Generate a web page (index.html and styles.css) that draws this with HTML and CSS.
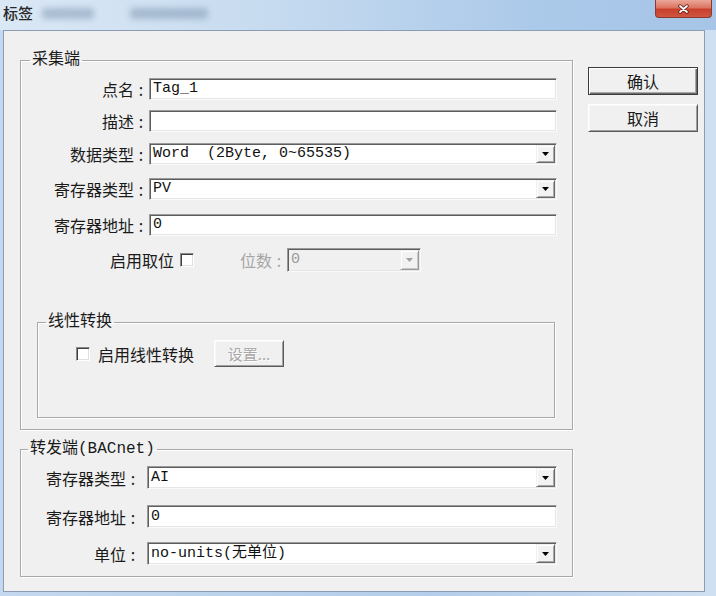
FILE: index.html
```html
<!DOCTYPE html>
<html lang="zh-CN">
<head>
<meta charset="utf-8">
<title>标签</title>
<link rel="stylesheet" href="styles.css">
</head>
<body>
<div class="window">
  <div class="titlebar">
    <span class="title">标签</span>
    <span class="blur b1"></span>
    <span class="blur b2"></span>
    <button class="close" type="button" aria-label="关闭">
      <svg width="11" height="10" viewBox="0 0 11 10"><path d="M2 2 L9 8 M9 2 L2 8" stroke="#5a1a12" stroke-width="3.4" stroke-linecap="round" fill="none"/><path d="M2 2 L9 8 M9 2 L2 8" stroke="#fff" stroke-width="1.8" stroke-linecap="round" fill="none"/></svg>
    </button>
  </div>
  <div class="client">
    <div class="main">
      <fieldset class="group g1">
        <legend>采集端</legend>
        <div class="row r1"><label class="lbl">点名<span class="colon">:</span></label><div class="field"><span class="val">Tag_1</span></div></div>
        <div class="row r2"><label class="lbl">描述<span class="colon">:</span></label><div class="field"><span class="val"></span></div></div>
        <div class="row r3"><label class="lbl">数据类型<span class="colon">:</span></label><div class="field combo"><span class="val">Word  (2Byte, 0~65535)</span><span class="drop"><svg width="7" height="4" viewBox="0 0 7 4"><path d="M0 0 H7 L3.5 4 Z" fill="#000"/></svg></span></div></div>
        <div class="row r4"><label class="lbl">寄存器类型<span class="colon">:</span></label><div class="field combo"><span class="val">PV</span><span class="drop"><svg width="7" height="4" viewBox="0 0 7 4"><path d="M0 0 H7 L3.5 4 Z" fill="#000"/></svg></span></div></div>
        <div class="row r5"><label class="lbl">寄存器地址<span class="colon">:</span></label><div class="field"><span class="val">0</span></div></div>
        <div class="row r6">
          <span class="txt">启用取位</span><span class="check"></span>
          <span class="txt dim bits">位数<span class="colon">:</span></span>
          <div class="field combo disabled"><span class="val">0</span><span class="drop"><svg width="7" height="4" viewBox="0 0 7 4"><path d="M0 0 H7 L3.5 4 Z" fill="#a0a0a0"/></svg></span></div>
        </div>
        <fieldset class="group g-inner">
          <legend>线性转换</legend>
          <div class="row lin">
            <span class="check"></span><span class="txt">启用线性转换</span>
            <button class="btn set" type="button" disabled>设置...</button>
          </div>
        </fieldset>
      </fieldset>
      <fieldset class="group g2">
        <legend>转发端(BACnet)</legend>
        <div class="row s1"><label class="lbl">寄存器类型<span class="colon">:</span></label><div class="field combo tall"><span class="val">AI</span><span class="drop"><svg width="7" height="4" viewBox="0 0 7 4"><path d="M0 0 H7 L3.5 4 Z" fill="#000"/></svg></span></div></div>
        <div class="row s2"><label class="lbl">寄存器地址<span class="colon">:</span></label><div class="field tall"><span class="val">0</span></div></div>
        <div class="row s3"><label class="lbl">单位<span class="colon">:</span></label><div class="field combo tall"><span class="val">no-units(无单位)</span><span class="drop"><svg width="7" height="4" viewBox="0 0 7 4"><path d="M0 0 H7 L3.5 4 Z" fill="#000"/></svg></span></div></div>
      </fieldset>
    </div>
    <div class="side">
      <button class="btn default" type="button">确认</button>
      <button class="btn" type="button">取消</button>
    </div>
  </div>
</div>
</body>
</html>
```
FILE: styles.css
```css
* { box-sizing: border-box; }
html, body { margin: 0; padding: 0; }
body {
  width: 716px;
  height: 596px;
  overflow: hidden;
  background: linear-gradient(to right, #c4d9ef, #b4cdea 60%, #cfe0f2);
  font-family: "Noto Sans CJK SC", sans-serif;
  font-size: 16px;
  line-height: 20px;
  color: #1a1a1a;
}
.window { display: flex; flex-direction: column; height: 596px; }

.titlebar {
  height: 30px;
  flex: none;
  display: flex;
  align-items: flex-start;
  background: linear-gradient(to right, #dbe8f5 0%, #c8dcf0 35%, #abc9e9 75%, #a6c5e7 100%);
}
.title { margin: 4px 0 0 3px; font-size: 15px; line-height: 18px; color: #262626; font-weight: 500; }
.blur {
  height: 11px;
  margin-top: 8px;
  background: #7189a6;
  opacity: .45;
  filter: blur(3px);
  border-radius: 3px;
}
.b1 { width: 52px; margin-left: 9px; }
.b2 { width: 78px; margin-left: 36px; }
.close {
  margin: 0 4px 0 auto;
  width: 57px;
  height: 18px;
  padding: 0;
  border: 1px solid #8a3a30;
  border-top: none;
  border-radius: 0 0 4px 4px;
  background: linear-gradient(#eba899 0%, #dd7462 45%, #c8402c 55%, #d0563f 100%);
  display: flex;
  align-items: center;
  justify-content: center;
}

.client {
  flex: 1;
  margin: 0 11px 4px 3px;
  border: 1px solid #8c9db3;
  background: #f0f0f0;
  display: flex;
  align-items: flex-start;
}
.main { padding-left: 16px; width: 569px; flex: none; }

.group {
  margin: 0;
  padding: 0 15px 11px 0;
  border: 1px solid #a8a8a8;
  box-shadow: inset 1px 1px 0 #fff, 1px 1px 0 #fff;
  min-width: 0;
}
.group legend {
  padding: 0 2px;
  height: 20px;
  line-height: 20px;
  font-family: "Liberation Mono", "Noto Sans CJK SC", monospace;
  font-size: 16px;
}
.g1 { margin-top: 19px; }
.g1 > legend { margin-left: 9px; }
.g2 { margin-top: 9px; }
.g2 > legend { margin-left: 7px; }

.row { display: flex; align-items: center; height: 22px; }
.lbl { width: 127px; flex: none; text-align: right; white-space: nowrap; line-height: 20px; }
.colon { display: inline-block; width: 14px; text-align: center; }
.r1 { margin-top: 8px; }
.r2 { margin-top: 10px; }
.r3 { margin-top: 11px; }
.r4 { margin-top: 13px; }
.r5 { margin-top: 14px; }
.r6 { margin-top: 12px; height: 24px; }

.field {
  flex: 1;
  height: 22px;
  margin-left: 1px;
  background: #fff;
  border: 1px solid;
  border-color: #9a9a9a #fafafa #fafafa #9a9a9a;
  box-shadow: inset 1px 1px 0 #5e5e5e, inset -1px -1px 0 #e6e6e6;
  display: flex;
  align-items: center;
  padding-left: 3px;
  overflow: hidden;
}
.field.tall { height: 23px; }
.val {
  font-family: "Liberation Mono", "Noto Sans CJK SC", monospace;
  font-size: 15px;
  line-height: 18px;
  white-space: pre;
  color: #111;
}
.drop {
  align-self: stretch;
  width: 19px;
  margin: 1px 1px 1px auto;
  background: #f2f2f2;
  border: 1px solid;
  border-color: #f0f0f0 #6a6a6a #6a6a6a #f0f0f0;
  box-shadow: inset 1px 1px 0 #fff, inset -1px -1px 0 #a8a8a8;
  display: flex;
  align-items: center;
  justify-content: center;
}

.txt { white-space: nowrap; line-height: 20px; }
.dim { color: #a6a6a6; }
.r6 > .txt:first-child { margin-left: 89px; }
.check {
  flex: none;
  width: 14px;
  height: 14px;
  background: #fff;
  border: 1px solid;
  border-color: #8a8a8a #fff #fff #8a8a8a;
  box-shadow: inset 1px 1px 0 #404040, inset -1px -1px 0 #e0e0e0;
}
.r6 .check { margin-left: 6px; }
.bits { margin-left: 46px; }
.field.disabled {
  flex: none;
  width: 134px;
  height: 24px;
  margin-left: 1px;
  background: #f0f0f0;
}
.field.disabled .val { color: #9a9a9a; }
.field.disabled .drop { border-color: #f0f0f0 #9a9a9a #9a9a9a #f0f0f0; box-shadow: inset 1px 1px 0 #fff, inset -1px -1px 0 #c8c8c8; }

.g-inner { margin: 40px 2px 0 16px; padding: 0 0 50px 0; }
.g-inner > legend { margin-left: 8px; }
.lin { margin-top: 8px; height: 27px; }
.lin .check { margin-left: 38px; }
.lin .txt { margin-left: 8px; }

.btn {
  font-family: "Noto Sans CJK SC", sans-serif;
  font-size: 16px;
  color: #1a1a1a;
  background: #f0f0f0;
  border: 1px solid;
  border-color: #fff #5a5a5a #5a5a5a #fff;
  box-shadow: inset 1px 1px 0 #f8f8f8, inset -1px -1px 0 #a0a0a0;
  padding: 0;
  line-height: 20px;
}
.set {
  margin-left: 20px;
  width: 70px;
  height: 27px;
  color: #a8a8a8;
  font-size: 15px;
  text-shadow: 1px 1px 0 #fff;
}

.side {
  flex: none;
  width: 110px;
  margin-left: 15px;
  padding-top: 36px;
  display: flex;
  flex-direction: column;
  gap: 9px;
}
.side .btn { height: 28px; width: 110px; }
.side .btn.default {
  border-color: #3c3c3c;
  box-shadow: inset 1px 1px 0 #fff, inset -1px -1px 0 #6a6a6a, inset -2px -2px 0 #a8a8a8;
}

.g2 .lbl { width: 119px; }
.g2 .field { margin-left: 7px; }
.g2 .row { height: 23px; }
.s1 { margin-top: 7px; }
.s2 { margin-top: 16px; }
.s3 { margin-top: 14px; }
```
